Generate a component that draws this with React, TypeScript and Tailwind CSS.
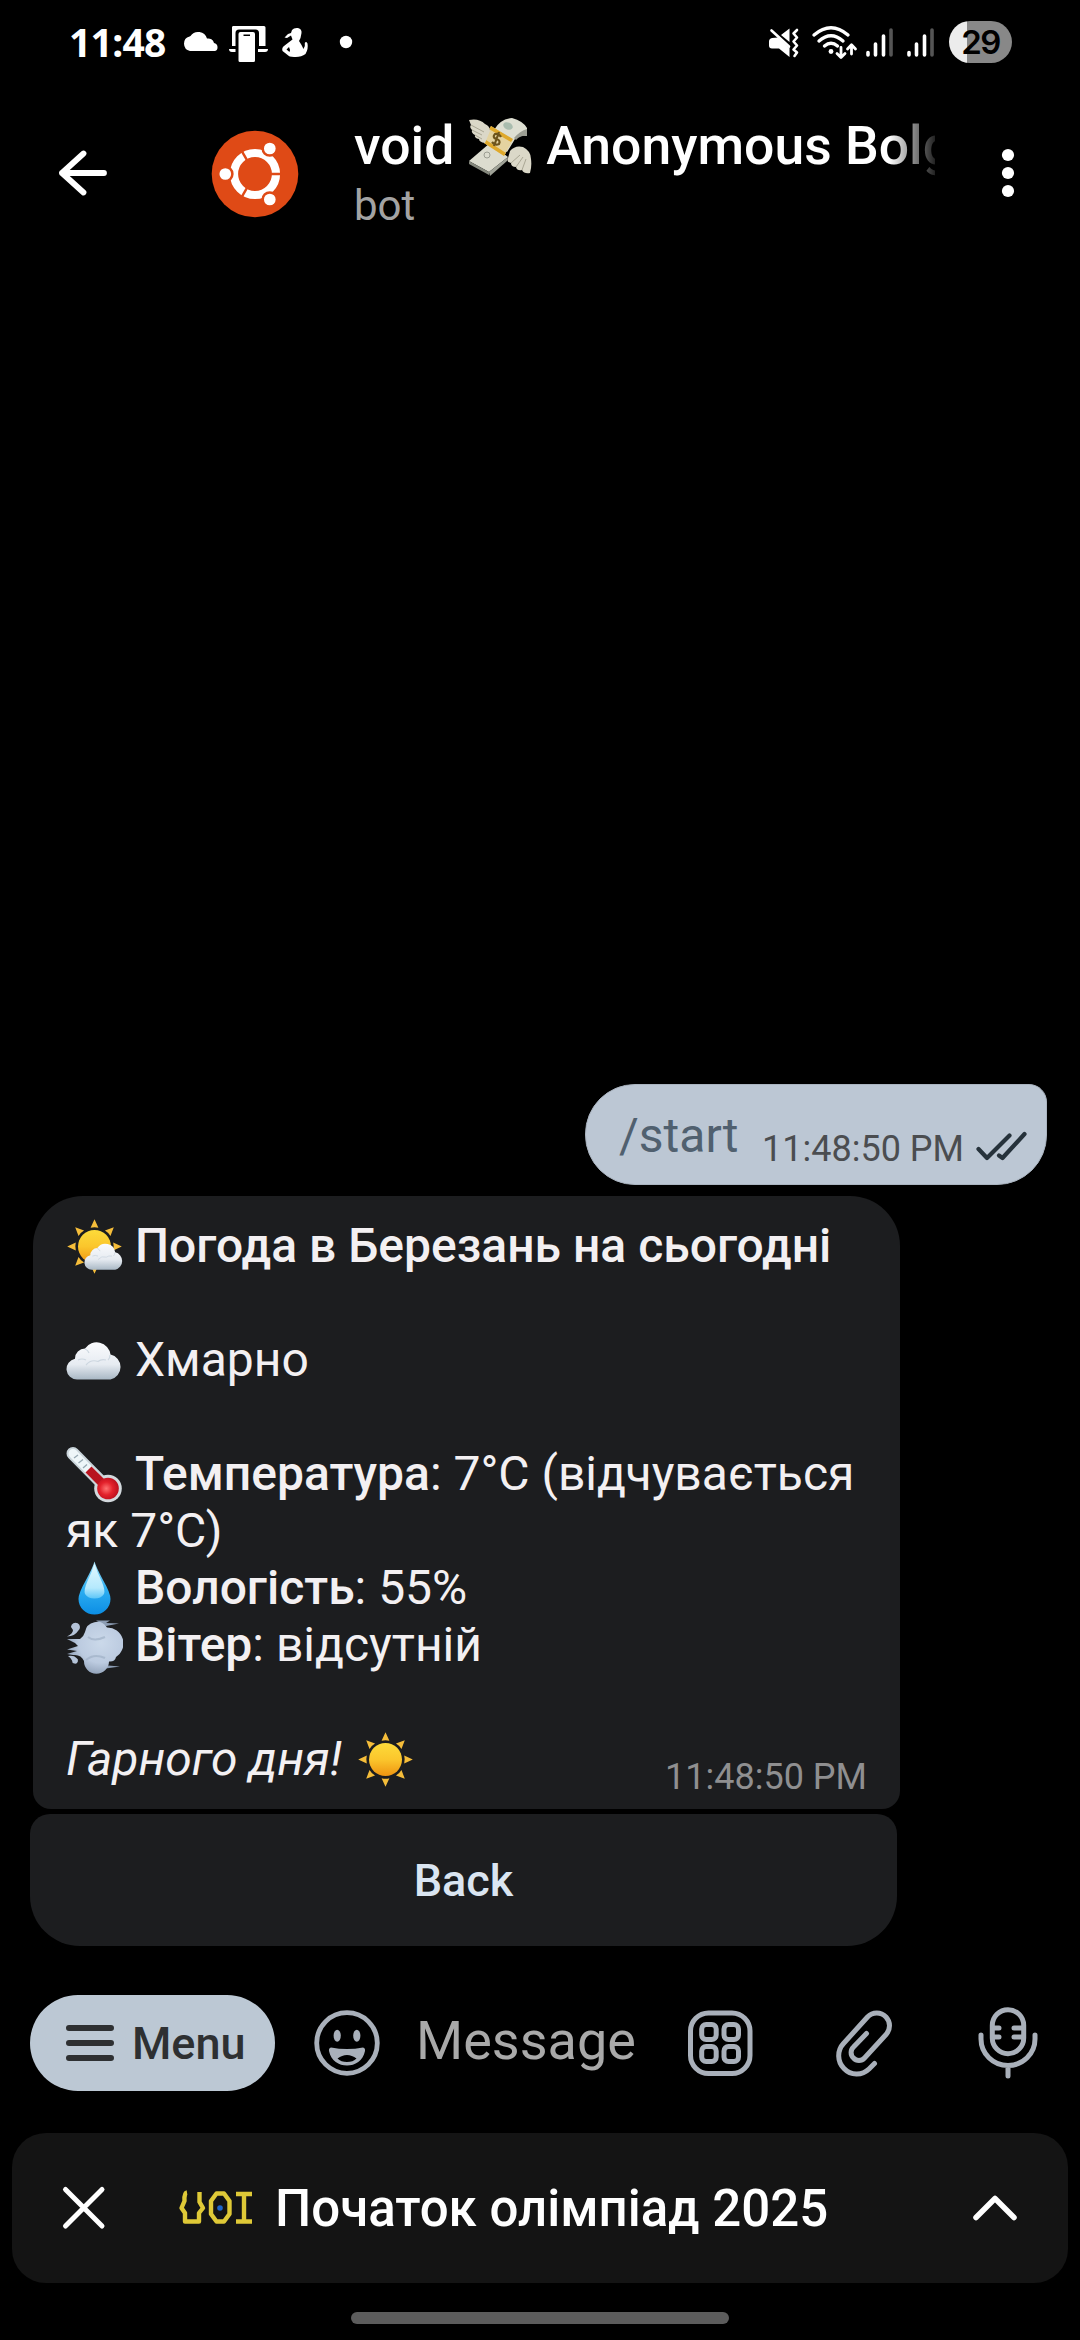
import type { ReactNode } from "react";

const ICON = "#a9b0ba";

function StatusBar() {
  return (
    <div className="flex h-[84px] w-full items-start pl-[69px] pr-[68px] text-white">
      <span className="h-[84px] w-[110px] whitespace-nowrap font-['Noto_Sans'] text-[39px] font-bold leading-[84px] tracking-[-0.7px]">11:48</span>
      <svg className="h-[84px] w-[181px]" viewBox="179 0 181 84" fill="#fff">
        <path d="M190 51 a7.5 7.5 0 0 1 -0.4 -14.6 A6 6 0 0 1 190.500 36 A9.300 9.300 0 0 1 207 38.500 A6 6 0 0 1 214 43 A4.200 4.200 0 0 1 215 51 Z" />
        <path d="M233 26 H264 Q265.500 26 265.500 27.500 V46 H259 V33 Q259 29.500 255.500 29.500 H239 Q235.500 29.500 235.500 33 V46 H232 V27.500 Q232 26 233 26 Z" />
        <path d="M229 49 H235.500 V52 H232 Q229 52 229 49 Z M258 49 H268 Q268 52 265 52 H258 Z" />
        <path fillRule="evenodd" d="M240.500 32 H253 Q255 32 255 34 V60.500 Q255 62 253.500 62 H240 Q238.500 62 238.500 60.500 V34 Q238.500 32 240.500 32 Z M243.500 34.500 V36 H250 V34.500 Z" />
        <path fillRule="evenodd" d="M292 30 Q294 27.500 298 28 Q302 29 301.500 33 L300.500 38 L299 41 L301.500 45 L303.500 49 Q305.500 46 304.800 43 Q306 40.800 307.500 43.500 Q308.500 49 305.500 54 Q301 57.500 294 57 Q289 57 287 54.500 L282.500 51 Q281.500 48 284 46 L290.500 41 L292.500 39.500 L291 35.500 L287 38 L284.500 37.500 L288 34 L291 33 Z M289 47 L286.500 49.500 L289.500 52 Q290.500 49.500 289 47 Z" />
        <circle cx="346" cy="42" r="6.200" />
      </svg>
      <svg className="ml-auto h-[84px] w-[183px]" viewBox="764 0 183 84">
        <g fill="none" stroke="#fff" strokeLinecap="round" strokeLinejoin="round">
          <path d="M769 41.500 Q769 38.500 772 38 L778 37.500 L789.500 48 V57 L779 48.500 H772 Q769 48.500 769 45.500 Z M781 35 L789.500 28.500 V42 Z" fill="#fff" stroke="none" />
          <path d="M771.500 30.500 L789 46.500" strokeWidth="2.600" />
          <path d="M797 30 L793.500 33.500 L797 37.500 L793.500 41.500 L797 45.500 L793.500 49.500 L797 52.500 L794.500 56" strokeWidth="2.600" />
          <path d="M814 35 Q831 20.500 848 35" strokeWidth="3.400" />
          <path d="M819 41 Q831 30.500 843 41" strokeWidth="3.400" />
          <path d="M824.500 46 Q831 40.500 837.500 46" strokeWidth="3.400" />
          <circle cx="831" cy="51.500" r="2.400" fill="#fff" stroke="none" />
          <path d="M841 47.500 V57 M837 53.500 L841 57.500 L845 53.500 M851.500 54 V45 M847.500 49 L851.500 44.800 L855.500 49" strokeWidth="2.800" />
          <g strokeWidth="3.600">
            <path d="M868 52.500 V55 M875.500 44 V55 M883.500 36 V55 M909 52.500 V55 M916.500 44 V55 M924.500 36 V55" />
            <path d="M891 30 V55 M932 30 V55" stroke="#555" />
          </g>
        </g>
      </svg>
      <div className="ml-[2px] mt-[21px] flex h-[42px] w-[63px] items-center justify-center rounded-full bg-[linear-gradient(90deg,#ececec_18px,#888_18px)] font-['Inter'] text-[33px] font-semibold leading-[42px] tracking-[-1.5px] text-black">
        29
      </div>
    </div>
  );
}

function MoneyWings() {
  return (
    <svg className="ml-[14px] mr-[14px] h-[62px] w-[64px] shrink-0" viewBox="0 0 64 62">
      <path d="M1 47 L22 29 L40 43 L21 58 Z" fill="#dcdccf" />
      <path d="M1 47 L21 58 L21 61 L1 50 Z" fill="#85887d" />
      <path d="M21 58 L40 43 L39 47 L22 62 Z" fill="#a0a398" />
      <path d="M26 16 Q32 5 44 4 Q55 7 59 14 L59 22 Q53 20 47 25 L39 38 L18 26 Z" fill="#dedfd2" />
      <path d="M59 15 Q52 17 46 24 L48 26 Q53 21 59 22 Z" fill="#9c9e93" />
      <ellipse cx="40" cy="12" rx="5" ry="3.500" fill="#a9bcae" transform="rotate(25 40 12)" />
      <circle cx="19" cy="41" r="3" fill="none" stroke="#9c9e93" />
      <path d="M23 12 L45 26 L36 42 L16 29 Z" fill="#e4d3a0" />
      <path d="M23 12 L45 25 L43 28 L21 15 Z M18 26 L38 39 L36 42 L16 29 Z" fill="#dfa92c" />
      <path d="M33 23 Q31 19 27 20 Q24 23 28 25 Q33 26 31 30 Q27 32 24 28 M31 18 L26 32" fill="none" stroke="#6d541c" strokeWidth="2.200" />
      <path d="M1 6 Q11 4 17 10 Q22 12 22 17 L17 29 Q11 28 11 25 Q6 24 7 21 Q3 19 4 16 Q1 13 3 11 Z" fill="#dbd8c8" />
      <path d="M3 11 L16 18 M4 16 L14 21 M7 21 L14 25" stroke="#aaa795" fill="none" />
      <path d="M42 37 Q47 31 55 33 Q63 37 63 45 Q64 52 62 59 Q56 60 54 56 Q49 57 48 53 Q43 53 43 49 Q38 48 40 44 Z" fill="#dbd8c8" />
      <path d="M43 49 L52 41 M48 53 L55 43 M54 56 L58 45" stroke="#aaa795" fill="none" />
    </svg>
  );
}

function Header() {
  return (
    <div className="flex h-[180px] w-full items-start">
      <svg className="h-[180px] w-[210px]" viewBox="0 84 210 180">
        <path d="M104 173 H62 M83.500 153.500 L62 173 L83.500 192.500" fill="none" stroke="#fff" strokeWidth="5.800" strokeLinecap="round" strokeLinejoin="round" />
      </svg>
      <svg className="h-[180px] w-[90px]" viewBox="210 84 90 180">
        <circle cx="255" cy="174" r="43.300" fill="#df4a16" />
        <circle cx="255" cy="174" r="21" fill="none" stroke="#fff" strokeWidth="8.200" />
        <g stroke="#df4a16" strokeWidth="2.500">
          <path d="M270 174 H282 M247.500 161 L241.500 150.600 M247.500 187 L241.500 197.400" />
          <g fill="#fff">
            <circle cx="225.300" cy="174" r="7.100" />
            <circle cx="269.800" cy="148.500" r="7.100" />
            <circle cx="269.800" cy="199.500" r="7.100" />
          </g>
        </g>
      </svg>
      <div className="ml-[54px] flex w-[581px] flex-col pt-[30px]">
        <div className="flex h-[64px] items-start overflow-hidden whitespace-nowrap font-['Roboto'] text-[53.5px] font-medium leading-[64px] text-white [mask-image:linear-gradient(90deg,#000_535px,transparent_588px)]">
          <span>void</span>
          <MoneyWings />
          <span>Anonymous Bolg</span>
        </div>
        <span className="mt-[3px] h-[50px] font-['Roboto'] text-[42px] leading-[50px] text-[#a3a3a3]">bot</span>
      </div>
      <svg className="ml-auto h-[180px] w-[145px]" viewBox="935 84 145 180" fill="#fff">
        <circle cx="1008" cy="155" r="6.100" />
        <circle cx="1008" cy="173" r="6.100" />
        <circle cx="1008" cy="191" r="6.100" />
      </svg>
    </div>
  );
}

function Outgoing() {
  return (
    <div className="ml-auto mr-[33px] flex h-[101px] w-[462px] items-start rounded-[50px] rounded-tr-[18px] border border-[#aab4c0] bg-[#bcc7d4] font-['Roboto']">
      <span className="ml-[33px] mt-[22px] text-[48px] leading-[57px] text-[#50606f]">/start</span>
      <span className="ml-auto mt-[42px] whitespace-nowrap text-[36px] leading-[44px] text-[#4b4d50]">11:48:50 PM</span>
      <svg className="ml-[12px] mr-[19px] mt-[46px] h-[34px] w-[51px]" viewBox="0 0 51 34" fill="none" stroke="#26323b" strokeWidth="4.200" strokeLinecap="round" strokeLinejoin="round">
        <path d="M2.500 18 L11 27 L33.500 4.500" />
        <path d="M23 24.500 L26.500 27 L48.500 3" />
      </svg>
    </div>
  );
}

const RAYS = [0, 45, 90, 135, 180, 225, 270, 315];

function SunBody() {
  return (
    <>
      {RAYS.map((a) => (
        <path key={a} d="M24.600 9.800 L28.500 1.200 L32.400 9.800 Q28.500 8.800 24.600 9.800 Z" fill="#f5bd3a" transform={`rotate(${a} 28.500 28.500)`} />
      ))}
      <circle cx="28.500" cy="28.500" r="16.500" fill="url(#sunFill)" />
      <defs>
        <linearGradient id="sunFill" x1="0" y1="0" x2="0" y2="1">
          <stop offset="0" stopColor="#fddb3a" />
          <stop offset=".5" stopColor="#fbc62c" />
          <stop offset="1" stopColor="#ee9411" />
        </linearGradient>
        <linearGradient id="cloudFill" x1="0" y1="0" x2="0" y2="1">
          <stop offset="0" stopColor="#fafbfd" />
          <stop offset=".6" stopColor="#e6ebf1" />
          <stop offset="1" stopColor="#a9b8c5" />
        </linearGradient>
      </defs>
    </>
  );
}

function Emoji({ children }: { children: ReactNode }) {
  return (
    <svg className="relative top-[1px] mr-[12px] h-[57px] w-[57px] shrink-0" viewBox="0 0 57 57">
      {children}
    </svg>
  );
}

const CLOUD = "M11 47.500 A10.500 10.500 0 0 1 9 26.700 A10 10 0 0 1 19 16.500 A14 14 0 0 1 44.500 22.500 A12.800 12.800 0 0 1 44.500 47.500 Z";

function CloudShape() {
  return (
    <>
      <path d={CLOUD} fill="url(#cloudFill)" />
      <path d="M20 33 Q25 27 32 29.500 Q35 27 40 28 M12 28 Q16 26 20 28 M19 17 Q22 18 23 21 M44 23 Q44 26 42 28" fill="none" stroke="#cdd7e0" strokeWidth="1.200" />
    </>
  );
}

function SunBehindCloud() {
  return (
    <Emoji>
      <SunBody />
      <g transform="translate(18 18.500) scale(.7)"><CloudShape /></g>
    </Emoji>
  );
}

function Thermometer() {
  return (
    <Emoji>
      <path d="M7 7.500 L40 41" stroke="#c9d4da" strokeWidth="13" strokeLinecap="round" />
      <circle cx="42" cy="42.500" r="13.800" fill="#d3d9dd" />
      <path d="M7 7.500 L28 29" stroke="#eef6f9" strokeWidth="9" strokeLinecap="round" />
      <path d="M22.500 23.500 L40 41" stroke="#b8141f" strokeWidth="8.500" />
      <circle cx="42" cy="42.500" r="10.800" fill="url(#bulb)" />
      <path d="M8 12 L12 9 M12.500 17 L17 13.500 M17 22 L21 18.500" stroke="#97a9b3" strokeWidth="1.300" />
      <defs>
        <radialGradient id="bulb" cx=".42" cy=".5" r=".6">
          <stop offset="0" stopColor="#ff7271" />
          <stop offset=".5" stopColor="#e3212b" />
          <stop offset="1" stopColor="#b80d1c" />
        </radialGradient>
      </defs>
    </Emoji>
  );
}

function Droplet() {
  return (
    <Emoji>
      <defs>
        <linearGradient id="drop" x1="0" y1="0" x2="0" y2="1">
          <stop offset="0" stopColor="#a5e2fb" />
          <stop offset=".5" stopColor="#2fb0f2" />
          <stop offset="1" stopColor="#0c8ee4" />
        </linearGradient>
        <linearGradient id="dropShine" x1="0" y1="0" x2="0" y2="1">
          <stop offset="0" stopColor="#e2f8ff" />
          <stop offset=".7" stopColor="#b5e9fd" />
          <stop offset="1" stopColor="#5cc6f8" />
        </linearGradient>
      </defs>
      <path d="M28.500 1.500 Q30 7 37 20 Q44.500 33 44.500 39 A16 15.500 0 0 1 12.500 39 Q12.500 33 20 20 Q27 7 28.500 1.500 Z" fill="url(#drop)" />
      <path d="M28.500 3.500 Q31 12 35.500 21 Q39.500 30 38 34 Q35 38.500 28.500 38.500 Q22 38.500 19 34 Q17.500 30 21.500 21 Q26 12 28.500 3.500 Z" fill="url(#dropShine)" />
    </Emoji>
  );
}

function Dash() {
  return (
    <Emoji>
      <defs>
        <radialGradient id="puff" cx=".6" cy=".4" r=".65">
          <stop offset="0" stopColor="#cbd9ea" />
          <stop offset=".6" stopColor="#bccbe0" />
          <stop offset="1" stopColor="#8c9db4" />
        </radialGradient>
      </defs>
      <path d="M30 3.500 H44 L40 6 L53 6.500 L40 9 Z M44 34 L55 35 L44 37 Z M36 48 L54 49.500 L36 52 Z" fill="#8c9db4" />
      <path d="M1 22 L14 22 Q18 19 19 15 A12 12 0 0 1 41 10.500 A16 16 0 0 1 50 40 Q49 45 43 44.500 A12.500 12.500 0 0 1 18 44 Q15 37 7 38 L1 37 L11 34 L1 32.500 L12 29 L9 26 Z" fill="url(#puff)" />
      <path d="M22 20 Q28 25 39 20 M20 43 Q28 36 39 41" fill="none" stroke="#9fb0c6" strokeWidth="2" opacity=".7" />
      <path d="M5 10 A4.500 4.500 0 1 1 12 14 Q9 19 1 19.500 Q7 16.500 7 13 Z M2 39 Q8 38 10.500 41 A3 3 0 1 1 6 43.500 Q5 41 2 39 Z" fill="#b4c3d8" />
    </Emoji>
  );
}

function Incoming() {
  return (
    <div className="ml-[33px] mt-[11px] flex h-[613px] w-[867px] flex-col whitespace-nowrap rounded-[50px] rounded-b-[18px] bg-[#1c1d1f] pl-[33px] pr-[33px] pt-[21px] font-['Roboto'] text-[48px] leading-[57px] text-[#f3f0f2]">
      <div className="flex h-[57px]"><SunBehindCloud /><b className="font-medium">Погода в Березань на сьогодні</b></div>
      <div className="mt-[57px] flex h-[57px]"><Emoji><CloudShape /></Emoji><span>Хмарно</span></div>
      <div className="mt-[57px] flex h-[57px]"><Thermometer /><span><b className="font-medium">Температура</b>: 7°C (відчувається</span></div>
      <div className="h-[57px]">як 7°C)</div>
      <div className="flex h-[57px]"><Droplet /><span><b className="font-medium">Вологість</b>: 55%</span></div>
      <div className="flex h-[57px]"><Dash /><span><b className="font-medium">Вітер</b>: відсутній</span></div>
      <div className="mt-[57px] flex h-[57px]">
        <i className="mr-[15px]">Гарного дня!</i>
        <Emoji><SunBody /></Emoji>
        <span className="ml-auto mt-[25px] text-[36px] leading-[44px] text-[#8f8f90]">11:48:50 PM</span>
      </div>
    </div>
  );
}

function Composer() {
  return (
    <div className="mt-[49px] flex h-[96px] items-start font-['Roboto']">
      <div className="ml-[30px] flex h-[96px] w-[245px] items-start rounded-full bg-[#bcc8d4]">
        <svg className="ml-[34px] h-[96px] w-[52px]" viewBox="64 1995 52 96">
          <path d="M69 2028 H111 M69 2043 H111 M69 2058 H111" stroke="#2e3032" strokeWidth="6" strokeLinecap="round" />
        </svg>
        <span className="ml-[16px] mt-[22px] text-[45px] font-medium leading-[54px] text-[#2e3032]">Menu</span>
      </div>
      <svg className="ml-[37px] h-[96px] w-[70px]" viewBox="312 1995 70 96">
        <circle cx="347" cy="2043" r="30.300" fill="none" stroke={ICON} strokeWidth="4.800" />
        <ellipse cx="337.200" cy="2035.700" rx="3.600" ry="6" fill={ICON} />
        <ellipse cx="356.800" cy="2035.700" rx="3.600" ry="6" fill={ICON} />
        <path fillRule="evenodd" d="M331 2047.500 Q347 2050.500 363 2047.500 Q365.500 2048 365 2051 C363 2061 355 2065.500 347 2065.500 C339 2065.500 331 2061 329 2051 Q328.500 2048 331 2047.500 Z M337.500 2058.500 Q341 2062 347 2062 Q353 2062 356.500 2058.500 Q352 2055 347 2055 Q342 2055 337.500 2058.500 Z" fill={ICON} />
      </svg>
      <span className="ml-[34px] mt-[15px] w-[264px] text-[54px] leading-[62px] text-[#a9a9a9]">Message</span>
      <svg className="h-[96px] w-[400px]" viewBox="680 1995 400 96" fill="none" stroke={ICON} strokeWidth="5" strokeLinecap="round" strokeLinejoin="round">
        <rect x="690.500" y="2013" width="59.500" height="60.500" rx="18" />
        <rect x="701.700" y="2024.500" width="14.500" height="15" rx="4.500" />
        <rect x="724" y="2024.500" width="14.500" height="15" rx="4.500" />
        <rect x="701.700" y="2046.500" width="14.500" height="15" rx="4.500" />
        <rect x="724" y="2046.500" width="14.500" height="15" rx="4.500" />
        <path d="M874.500 2063.500 L869 2069 A17.500 17.500 0 0 1 844 2068.500 A18 18 0 0 1 843.500 2043.500 L867.500 2017 A12.800 12.800 0 0 1 886 2017 A12.800 12.800 0 0 1 886.500 2034 L864.500 2058 A7.500 7.500 0 0 1 853.500 2058 A7.500 7.500 0 0 1 853.500 2047 L866.500 2033.500" />
        <rect x="992.300" y="2009.700" width="31.400" height="44" rx="15.700" />
        <path d="M981 2035 V2039 A27 26.500 0 0 0 1035 2039 V2035 M1008 2066 V2076 M994 2028 H999 M994 2037 H999 M1014 2028 H1022 M1014 2037 H1022" />
      </svg>
    </div>
  );
}

function WebAppBar() {
  return (
    <div className="ml-[12px] mt-[42px] flex h-[150px] w-[1056px] items-start rounded-[34px] bg-[#141414]">
      <svg className="h-[150px] w-[160px]" viewBox="12 2133 160 150">
        <path d="M65.500 2189.500 L102 2226 M102 2189.500 L65.500 2226" stroke="#fff" strokeWidth="5" strokeLinecap="round" />
      </svg>
      <svg className="h-[150px] w-[90px]" viewBox="172 2133 90 150" fill="none" stroke="#dfc937" strokeWidth="4.400" strokeLinejoin="round">
        <path d="M187 2192.500 Q184 2193 184.500 2201 L181.500 2208 L185 2213 V2221.500 H199 V2213 L203 2208 L199.500 2202 V2192" />
        <path d="M216.500 2193.500 H224 L229.500 2201 V2214 L224 2221.500 H216.500 L211 2214 V2201 Z" />
        <path d="M236 2194 H252 M236 2221.500 H252 M244 2194 V2221.500" />
        <circle cx="220" cy="2208" r="2.800" fill="#1d64c8" stroke="none" />
      </svg>
      <span className="ml-[13px] mt-[46px] whitespace-nowrap font-['Roboto'] text-[51px] font-medium leading-[60px] text-white">Початок олімпіад 2025</span>
      <svg className="ml-auto h-[150px] w-[120px]" viewBox="948 2133 120 150">
        <path d="M976 2217.500 L995 2198.500 L1014 2217.500" fill="none" stroke="#fff" strokeWidth="5.500" strokeLinecap="round" strokeLinejoin="round" />
      </svg>
    </div>
  );
}

export default function App() {
  return (
    <div className="flex h-[2340px] w-[1080px] flex-col overflow-hidden bg-black">
      <StatusBar />
      <Header />
      <div className="h-[820px] shrink-0" />
      <Outgoing />
      <Incoming />
      <div className="ml-[30px] mt-[5px] flex h-[132px] w-[867px] items-start justify-center rounded-[50px] rounded-t-[20px] bg-[#1c1d1f] pt-[40px] font-['Roboto'] text-[45px] font-medium leading-[54px] text-[#dae5f1]">
        Back
      </div>
      <Composer />
      <WebAppBar />
      <div className="mx-auto mt-[29px] h-[12px] w-[378px] rounded-full bg-[#5c5c5c]" />
    </div>
  );
}
